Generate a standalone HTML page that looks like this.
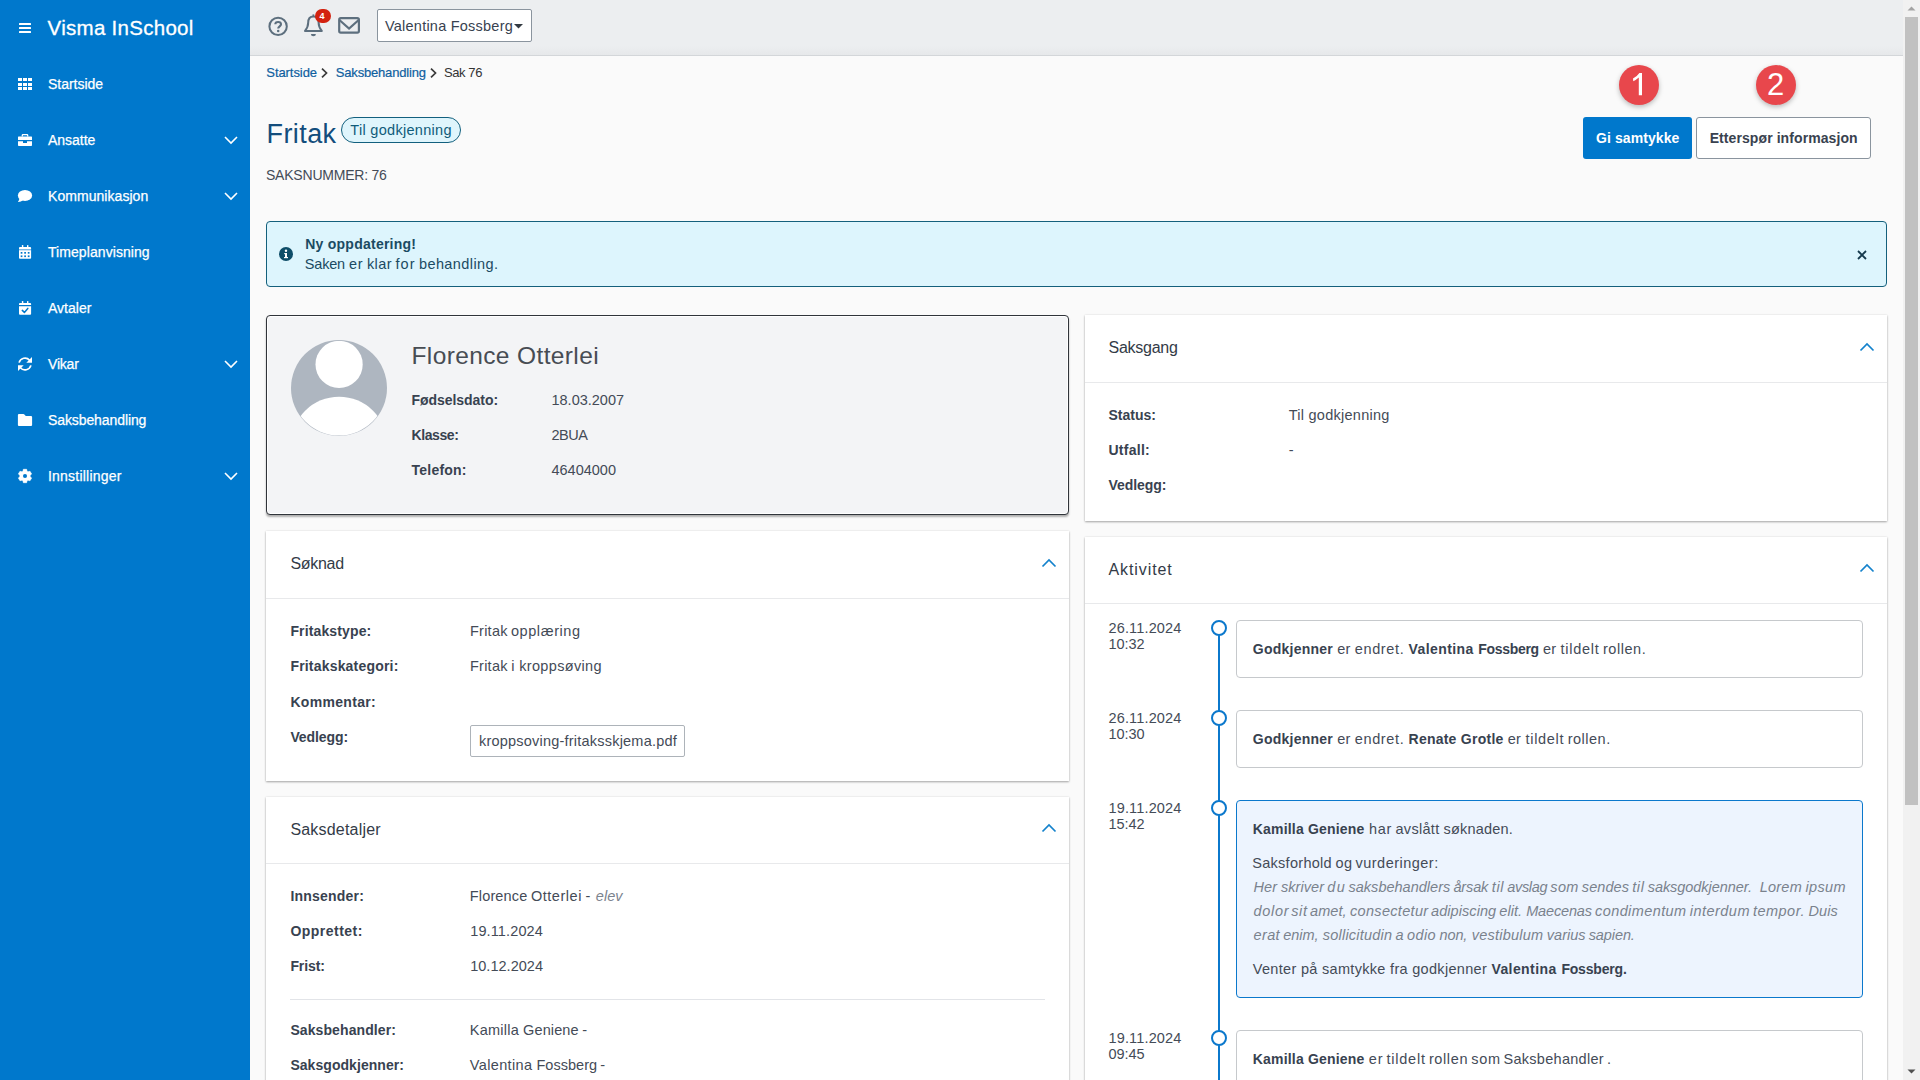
<!DOCTYPE html>
<html lang="no"><head><meta charset="utf-8"><title>Visma InSchool</title>
<style>
html,body{margin:0;padding:0;}
body{width:1920px;height:1080px;overflow:hidden;position:relative;background:#fafafa;font-family:"Liberation Sans",sans-serif;}
.t{position:absolute;white-space:pre;}
svg{position:absolute;overflow:visible;}
</style></head><body>
<div class="frame">
<div style="position:absolute;left:250px;top:0px;width:1653px;height:55px;background:linear-gradient(#eceef0 0,#eceef0 46px,#e6e8ea 55px);border-bottom:1px solid #d3d6d9;"></div>
<div style="position:absolute;left:0px;top:0px;width:250px;height:1080px;background:#0078cc;"></div>
<div style="position:absolute;left:1903px;top:0px;width:17px;height:1080px;background:#f1f1f1;"></div>
<div style="position:absolute;left:1905px;top:17px;width:13px;height:788px;background:#c1c1c1;"></div>
<svg style="left:1903px;top:0" width="17" height="17"><path d="M4.5 10.5 L8.5 6.5 L12.5 10.5Z" fill="#a3a3a3"/></svg>
<svg style="left:1903px;top:1063px" width="17" height="17"><path d="M4.5 6.5 L8.5 10.5 L12.5 6.5Z" fill="#505050"/></svg>
</div>
<nav class="sidebar">
<div style="position:absolute;left:19px;top:22.8px;width:12.3px;height:1.8px;background:#fff;border-radius:.5px;"></div>
<div style="position:absolute;left:19px;top:27.1px;width:12.3px;height:1.8px;background:#fff;border-radius:.5px;"></div>
<div style="position:absolute;left:19px;top:31.4px;width:12.3px;height:1.8px;background:#fff;border-radius:.5px;"></div>
<svg style="left:224px;top:136px" width="14" height="8"><path d="M1 1 L7 7 L13 1" fill="none" stroke="#fff" stroke-width="1.6"/></svg>
<svg style="left:224px;top:192px" width="14" height="8"><path d="M1 1 L7 7 L13 1" fill="none" stroke="#fff" stroke-width="1.6"/></svg>
<svg style="left:224px;top:360px" width="14" height="8"><path d="M1 1 L7 7 L13 1" fill="none" stroke="#fff" stroke-width="1.6"/></svg>
<svg style="left:224px;top:472px" width="14" height="8"><path d="M1 1 L7 7 L13 1" fill="none" stroke="#fff" stroke-width="1.6"/></svg>
<div style="position:absolute;left:18px;top:78px;width:4px;height:3px;background:#fff;"></div>
<div style="position:absolute;left:18px;top:82.5px;width:4px;height:3px;background:#fff;"></div>
<div style="position:absolute;left:18px;top:87px;width:4px;height:3px;background:#fff;"></div>
<div style="position:absolute;left:23px;top:78px;width:4px;height:3px;background:#fff;"></div>
<div style="position:absolute;left:23px;top:82.5px;width:4px;height:3px;background:#fff;"></div>
<div style="position:absolute;left:23px;top:87px;width:4px;height:3px;background:#fff;"></div>
<div style="position:absolute;left:28px;top:78px;width:4px;height:3px;background:#fff;"></div>
<div style="position:absolute;left:28px;top:82.5px;width:4px;height:3px;background:#fff;"></div>
<div style="position:absolute;left:28px;top:87px;width:4px;height:3px;background:#fff;"></div>
<svg style="left:0;top:0" width="250" height="600"><path d="M18.6 136.4 H31.4 Q32 136.4 32 137 V140 H18 V137 Q18 136.4 18.6 136.4Z" fill="#fff"/>
<path d="M18 141.2 H23 V143 H27 V141.2 H32 V145.3 Q32 146.1 31.2 146.1 H18.8 Q18 146.1 18 145.3Z" fill="#fff"/>
<path d="M22.3 136.6 V135.3 Q22.3 134.6 23 134.6 H27 Q27.7 134.6 27.7 135.3 V136.6" fill="none" stroke="#fff" stroke-width="1.3"/></svg>
<svg style="left:0;top:0" width="250" height="600"><ellipse cx="25" cy="195.4" rx="7.1" ry="5.5" fill="#fff"/><path d="M19.5 198 Q19.3 200.5 17.9 201.9 Q21 202 23 200.3Z" fill="#fff"/></svg>
<svg style="left:0;top:0" width="250" height="600"><rect x="21.9" y="245" width="1.4" height="3" rx="0.5" fill="#fff"/><rect x="27" y="245" width="1.4" height="3" rx="0.5" fill="#fff"/>
<path d="M19.9 247 H30.2 Q31.1 247 31.1 247.9 V249.1 H19 V247.9 Q19 247 19.9 247Z" fill="#fff"/><rect x="19" y="249.1" width="12.1" height="1.3" fill="#fff" opacity="0.55"/>
<path d="M19 250.3 H31.1 V257.8 Q31.1 258.8 30.1 258.8 H20 Q19 258.8 19 257.8Z" fill="#fff"/><rect x="20.7" y="252.0" width="1.7" height="1.7" fill="#0078cc"/><rect x="20.7" y="255.39999999999998" width="1.7" height="1.7" fill="#0078cc"/><rect x="24.25" y="252.0" width="1.7" height="1.7" fill="#0078cc"/><rect x="24.25" y="255.39999999999998" width="1.7" height="1.7" fill="#0078cc"/><rect x="27.8" y="252.0" width="1.7" height="1.7" fill="#0078cc"/><rect x="27.8" y="255.39999999999998" width="1.7" height="1.7" fill="#0078cc"/></svg>
<svg style="left:0;top:0" width="250" height="600"><rect x="21.9" y="301" width="1.4" height="3" rx="0.5" fill="#fff"/><rect x="27" y="301" width="1.4" height="3" rx="0.5" fill="#fff"/>
<path d="M19.9 303 H30.2 Q31.1 303 31.1 303.9 V305.1 H19 V303.9 Q19 303 19.9 303Z" fill="#fff"/><path d="M19 306.3 H31.1 V313.8 Q31.1 314.8 30.1 314.8 H20 Q19 314.8 19 313.8Z" fill="#fff"/>
<path d="M22.3 310.4 L24.4 312.4 L27.8 308.4" fill="none" stroke="#0078cc" stroke-width="1.5" stroke-linecap="round" stroke-linejoin="round"/></svg>
<svg style="left:0;top:0" width="250" height="600"><path d="M19.1 362.6 A6.1 6.1 0 0 1 29.6 360.2" fill="none" stroke="#fff" stroke-width="1.7"/>
<path d="M32 357.1 V362.8 H26.3Z" fill="#fff"/>
<path d="M30.9 365.4 A6.1 6.1 0 0 1 20.4 367.8" fill="none" stroke="#fff" stroke-width="1.7"/>
<path d="M18 370.9 V365.2 H23.7Z" fill="#fff"/></svg>
<svg style="left:0;top:0" width="250" height="600"><path d="M19 413.9 H23.2 Q23.7 413.9 24.1 414.3 L25.8 416 H31 Q32.1 416 32.1 417.1 V425 Q32.1 426.1 31 426.1 H19 Q17.9 426.1 17.9 425 V415 Q17.9 413.9 19 413.9Z" fill="#fff"/></svg>
<svg style="left:0;top:0" width="250" height="600"><path d="M22.92 471.34 L23.36 469.30 L26.64 469.30 L27.08 471.34 L27.99 471.87 L29.98 471.23 L31.62 474.07 L30.07 475.47 L30.07 476.53 L31.62 477.93 L29.98 480.77 L27.99 480.13 L27.08 480.66 L26.64 482.70 L23.36 482.70 L22.92 480.66 L22.01 480.13 L20.02 480.77 L18.38 477.93 L19.93 476.53 L19.93 475.47 L18.38 474.07 L20.02 471.23 L22.01 471.87Z" fill="#fff" stroke="#fff" stroke-width="0.6" stroke-linejoin="round"/><circle cx="25" cy="476" r="2.05" fill="#0078cc"/></svg>
<span class="t" style="left:47.60px;top:14px;line-height:28px;color:#fff;font-size:20.5px;font-weight:400;font-style:normal;letter-spacing:0.281px;-webkit-text-stroke:0.3px #fff;">Visma InSchool </span>
<span class="t" style="left:48.00px;top:74px;line-height:20px;color:#fff;font-size:14px;font-weight:400;font-style:normal;letter-spacing:-0.028px;-webkit-text-stroke:0.25px #fff;">Startside </span>
<span class="t" style="left:48.00px;top:130px;line-height:20px;color:#fff;font-size:14px;font-weight:400;font-style:normal;letter-spacing:-0.026px;-webkit-text-stroke:0.25px #fff;">Ansatte </span>
<span class="t" style="left:48.00px;top:186px;line-height:20px;color:#fff;font-size:14px;font-weight:400;font-style:normal;letter-spacing:0.053px;-webkit-text-stroke:0.25px #fff;">Kommunikasjon </span>
<span class="t" style="left:48.00px;top:242px;line-height:20px;color:#fff;font-size:14px;font-weight:400;font-style:normal;letter-spacing:0.071px;-webkit-text-stroke:0.25px #fff;">Timeplanvisning </span>
<span class="t" style="left:48.00px;top:298px;line-height:20px;color:#fff;font-size:14px;font-weight:400;font-style:normal;letter-spacing:0.010px;-webkit-text-stroke:0.25px #fff;">Avtaler </span>
<span class="t" style="left:48.00px;top:354px;line-height:20px;color:#fff;font-size:14px;font-weight:400;font-style:normal;letter-spacing:-0.191px;-webkit-text-stroke:0.25px #fff;">Vikar </span>
<span class="t" style="left:48.00px;top:410px;line-height:20px;color:#fff;font-size:14px;font-weight:400;font-style:normal;letter-spacing:-0.096px;-webkit-text-stroke:0.25px #fff;">Saksbehandling </span>
<span class="t" style="left:48.00px;top:466px;line-height:20px;color:#fff;font-size:14px;font-weight:400;font-style:normal;letter-spacing:0.221px;-webkit-text-stroke:0.25px #fff;">Innstillinger </span>
</nav>
<header class="topbar">
<svg style="left:0;top:0" width="400" height="56"><circle cx="278.1" cy="26.4" r="8.7" fill="none" stroke="#5d6f7e" stroke-width="2"/><path d="M275.3 24.3 C275.3 21.2 281 21.2 281 24.3 C281 26.3 278.2 26.4 278.2 28.6" fill="none" stroke="#5d6f7e" stroke-width="2.1"/><circle cx="278.2" cy="30.9" r="1.25" fill="#5d6f7e"/><path d="M313.4 16.4 C309.2 16.4 308.2 19.8 308.2 22.6 C308.2 26.6 307 28.6 305 31 L321.8 31 C319.8 28.6 318.6 26.6 318.6 22.6 C318.6 19.8 317.6 16.4 313.4 16.4Z" fill="none" stroke="#5d6f7e" stroke-width="2" stroke-linejoin="round"/><rect x="312.5" y="14.4" width="1.8" height="2" fill="#5d6f7e"/><path d="M310.9 33.9 A2.5 2.4 0 0 0 315.9 33.9Z" fill="#5d6f7e"/><rect x="339.2" y="18.1" width="19.7" height="14.6" rx="1.6" fill="none" stroke="#5d6f7e" stroke-width="2.2"/><path d="M339.4 20 L349.05 28.6 L358.7 20" fill="none" stroke="#5d6f7e" stroke-width="2.2"/></svg>
<div style="position:absolute;left:315px;top:9px;width:16px;height:14px;background:#d3220f;border-radius:7px;"></div>
<div style="position:absolute;left:377px;top:9px;width:153px;height:31px;background:#fff;border:1px solid #8a949e;border-radius:2px;"></div>
<svg style="left:513.8px;top:24.2px" width="10" height="6"><path d="M0 0 L9 0 L4.5 4.6Z" fill="#333a42"/></svg>
<span class="t" style="left:319.60px;top:6px;line-height:20px;color:#fff;font-size:9px;font-weight:700;font-style:normal;letter-spacing:0.000px;">4 </span>
<span class="t" style="left:385.00px;top:16px;line-height:20px;color:#384250;font-size:14.5px;font-weight:400;font-style:normal;letter-spacing:0.230px;">Valentina Fossberg </span>
</header>
<nav class="breadcrumb">
<svg style="left:320.5px;top:68px" width="7" height="10"><path d="M1 0.7 L5.5 5 L1 9.3" fill="none" stroke="#3a3a3a" stroke-width="1.7"/></svg>
<svg style="left:429.5px;top:68px" width="7" height="10"><path d="M1 0.7 L5.5 5 L1 9.3" fill="none" stroke="#3a3a3a" stroke-width="1.7"/></svg>
<span class="t" style="left:266.30px;top:63px;line-height:20px;color:#0f5f9f;font-size:13px;font-weight:400;font-style:normal;letter-spacing:-0.068px;-webkit-text-stroke:0.2px;">Startside </span>
<span class="t" style="left:335.80px;top:63px;line-height:20px;color:#0f5f9f;font-size:13px;font-weight:400;font-style:normal;letter-spacing:-0.181px;-webkit-text-stroke:0.2px;">Saksbehandling </span>
<span class="t" style="left:444.00px;top:63px;line-height:20px;color:#333;font-size:13px;font-weight:400;font-style:normal;letter-spacing:-0.414px;">Sak 76 </span>
</nav>
<section class="pagehead">
<div style="position:absolute;left:341px;top:117px;width:118px;height:24px;background:#dff5fc;border:1px solid #12607e;border-radius:13px;"></div>
<span class="t" style="left:266.50px;top:117px;line-height:34px;color:#134d7c;font-size:27px;font-weight:400;font-style:normal;letter-spacing:0.417px;">Fritak </span>
<span class="t" style="left:350.30px;top:120px;line-height:20px;color:#105c7a;font-size:14.5px;font-weight:400;font-style:normal;letter-spacing:0.300px;">Til godkjenning </span>
<span class="t" style="left:266.00px;top:165px;line-height:20px;color:#444b57;font-size:14px;font-weight:400;font-style:normal;letter-spacing:-0.215px;">SAKSNUMMER: 76 </span>
</section>
<div class="actions">
<div style="position:absolute;left:1619px;top:65px;width:40px;height:40px;background:#e8474c;border-radius:50%;box-shadow:0 2px 5px rgba(0,0,0,.26);"></div>
<svg style="left:0;top:0" width="1920" height="120"><path d="M1639.4 73 L1642 73 L1642 95.2 L1638.8 95.2 L1638.8 77.6 Q1636.4 79.8 1633.3 81.3 L1633 78.4 Q1637.2 76.4 1639.4 73Z" fill="#fff"/></svg>
<div style="position:absolute;left:1756px;top:65px;width:40px;height:40px;background:#e8474c;border-radius:50%;box-shadow:0 2px 5px rgba(0,0,0,.26);"></div>
<div style="position:absolute;left:1583px;top:117px;width:109px;height:42px;background:#0078cc;border-radius:3px;"></div>
<div style="position:absolute;left:1696px;top:117px;width:173px;height:40px;background:#fff;border:1px solid #8a949e;border-radius:3px;"></div>
<span class="t" style="left:1766.90px;top:65px;line-height:40px;color:#fff;font-size:31px;font-weight:400;font-style:normal;letter-spacing:0.000px;">2 </span>
<span class="t" style="left:1596.00px;top:128px;line-height:20px;color:#fff;font-size:14px;font-weight:700;font-style:normal;letter-spacing:0.091px;">Gi samtykke </span>
<span class="t" style="left:1709.70px;top:128px;line-height:20px;color:#39424f;font-size:14px;font-weight:700;font-style:normal;letter-spacing:0.083px;">Etterspør informasjon </span>
</div>
<div class="alert">
<div style="position:absolute;left:266px;top:221px;width:1619px;height:64px;background:#ddf5fd;border:1px solid #14607c;border-radius:4px;"></div>
<svg style="left:279px;top:247px" width="14" height="14"><circle cx="7" cy="7" r="7" fill="#0e4d68"/><rect x="6" y="6" width="2" height="5" fill="#fff"/><rect x="5.2" y="6" width="2" height="1.2" fill="#fff"/><rect x="5" y="10" width="4" height="1.2" fill="#fff"/><circle cx="7" cy="3.8" r="1.2" fill="#fff"/></svg>
<svg style="left:1857px;top:250px" width="10" height="10"><path d="M1 1 L9 9 M9 1 L1 9" stroke="#163a4d" stroke-width="1.8"/></svg>
<span class="t" style="left:305.25px;top:234px;line-height:20px;color:#1b4b63;font-size:14px;font-weight:700;font-style:normal;letter-spacing:0.244px;">Ny oppdatering! </span>
<span class="t" style="left:304.80px;top:254px;line-height:20px;color:#1b4b63;font-size:14.5px;font-weight:400;font-style:normal;letter-spacing:-0.185px;">Saken </span>
<span class="t" style="left:348.95px;top:254px;line-height:20px;color:#1b4b63;font-size:14.5px;font-weight:400;font-style:normal;letter-spacing:0.772px;">er </span>
<span class="t" style="left:366.90px;top:254px;line-height:20px;color:#1b4b63;font-size:14.5px;font-weight:400;font-style:normal;letter-spacing:0.456px;">klar </span>
<span class="t" style="left:395.60px;top:254px;line-height:20px;color:#1b4b63;font-size:14.5px;font-weight:400;font-style:normal;letter-spacing:0.976px;">for </span>
<span class="t" style="left:418.95px;top:254px;line-height:20px;color:#1b4b63;font-size:14.5px;font-weight:400;font-style:normal;letter-spacing:0.405px;">behandling. </span>
</div>
<section class="profile">
<div style="position:absolute;left:266px;top:315px;width:801px;height:198px;background:#f3f4f6;border:1px solid #30343a;border-radius:4px;box-shadow:0 2px 2px rgba(0,0,0,.3),inset 0 0 0 1px #fff;"></div>
<svg style="left:291px;top:340px" width="96" height="96"><defs><clipPath id="av"><circle cx="48" cy="48" r="47.5"/></clipPath></defs>
<circle cx="48" cy="48" r="48" fill="#aeb6c0"/><g clip-path="url(#av)"><circle cx="48.1" cy="24.4" r="23.6" fill="#fff"/><circle cx="48.1" cy="104.7" r="48" fill="#fff"/></g></svg>
<span class="t" style="left:411.50px;top:340px;line-height:32px;color:#474c53;font-size:24.5px;font-weight:400;font-style:normal;letter-spacing:0.376px;">Florence Otterlei </span>
<span class="t" style="left:411.50px;top:390px;line-height:20px;color:#384250;font-size:14px;font-weight:700;font-style:normal;letter-spacing:-0.052px;">Fødselsdato: </span>
<span class="t" style="left:551.50px;top:390px;line-height:20px;color:#444b57;font-size:14.5px;font-weight:400;font-style:normal;letter-spacing:-0.008px;">18.03.2007 </span>
<span class="t" style="left:411.50px;top:425px;line-height:20px;color:#384250;font-size:14px;font-weight:700;font-style:normal;letter-spacing:-0.402px;">Klasse: </span>
<span class="t" style="left:551.50px;top:425px;line-height:20px;color:#444b57;font-size:14.5px;font-weight:400;font-style:normal;letter-spacing:-0.473px;">2BUA </span>
<span class="t" style="left:411.50px;top:460px;line-height:20px;color:#384250;font-size:14px;font-weight:700;font-style:normal;letter-spacing:0.230px;">Telefon: </span>
<span class="t" style="left:551.50px;top:460px;line-height:20px;color:#444b57;font-size:14.5px;font-weight:400;font-style:normal;letter-spacing:-0.002px;">46404000 </span>
</section>
<section class="soknad">
<div style="position:absolute;left:266px;top:531px;width:803px;height:250px;background:#fff;box-shadow:0 1px 2px rgba(0,0,0,.33),0 0 2px rgba(0,0,0,.08);"></div>
<div style="position:absolute;left:266px;top:598px;width:803px;height:1px;background:#e8e9eb;"></div>
<svg style="left:1040.9px;top:558px" width="16" height="10"><path d="M1.5 8.5 L8 2 L14.5 8.5" fill="none" stroke="#1482cc" stroke-width="1.7"/></svg>
<div style="position:absolute;left:470px;top:725px;width:213px;height:30px;background:#fff;border:1px solid #adb3b9;border-radius:2px;"></div>
<span class="t" style="left:290.40px;top:553px;line-height:22px;color:#333b47;font-size:16px;font-weight:400;font-style:normal;letter-spacing:-0.290px;">Søknad </span>
<span class="t" style="left:290.40px;top:621px;line-height:20px;color:#384250;font-size:14px;font-weight:700;font-style:normal;letter-spacing:0.137px;">Fritakstype: </span>
<span class="t" style="left:469.90px;top:621px;line-height:20px;color:#444b57;font-size:14.5px;font-weight:400;font-style:normal;letter-spacing:0.275px;">Fritak </span>
<span class="t" style="left:510.90px;top:621px;line-height:20px;color:#444b57;font-size:14.5px;font-weight:400;font-style:normal;letter-spacing:0.589px;">opplæring </span>
<span class="t" style="left:290.40px;top:656px;line-height:20px;color:#384250;font-size:14px;font-weight:700;font-style:normal;letter-spacing:0.191px;">Fritakskategori: </span>
<span class="t" style="left:469.90px;top:656px;line-height:20px;color:#444b57;font-size:14.5px;font-weight:400;font-style:normal;letter-spacing:0.275px;">Fritak </span>
<span class="t" style="left:511.30px;top:656px;line-height:20px;color:#444b57;font-size:14.5px;font-weight:400;font-style:normal;letter-spacing:0.366px;">i </span>
<span class="t" style="left:519.20px;top:656px;line-height:20px;color:#444b57;font-size:14.5px;font-weight:400;font-style:normal;letter-spacing:0.342px;">kroppsøving </span>
<span class="t" style="left:290.40px;top:692px;line-height:20px;color:#384250;font-size:14px;font-weight:700;font-style:normal;letter-spacing:0.313px;">Kommentar: </span>
<span class="t" style="left:290.40px;top:727px;line-height:20px;color:#384250;font-size:14px;font-weight:700;font-style:normal;letter-spacing:-0.095px;">Vedlegg: </span>
<span class="t" style="left:479.00px;top:731px;line-height:20px;color:#444b57;font-size:14.5px;font-weight:400;font-style:normal;letter-spacing:0.213px;">kroppsoving-fritaksskjema.pdf </span>
</section>
<section class="saksdetaljer">
<div style="position:absolute;left:266px;top:797px;width:803px;height:300px;background:#fff;box-shadow:0 1px 2px rgba(0,0,0,.33),0 0 2px rgba(0,0,0,.08);"></div>
<div style="position:absolute;left:266px;top:863px;width:803px;height:1px;background:#e8e9eb;"></div>
<svg style="left:1040.9px;top:823px" width="16" height="10"><path d="M1.5 8.5 L8 2 L14.5 8.5" fill="none" stroke="#1482cc" stroke-width="1.7"/></svg>
<div style="position:absolute;left:290px;top:999px;width:755px;height:1px;background:#e2e4e8;"></div>
<span class="t" style="left:290.40px;top:819px;line-height:22px;color:#333b47;font-size:16px;font-weight:400;font-style:normal;letter-spacing:0.196px;">Saksdetaljer </span>
<span class="t" style="left:290.40px;top:886px;line-height:20px;color:#384250;font-size:14px;font-weight:700;font-style:normal;letter-spacing:0.222px;">Innsender: </span>
<span class="t" style="left:469.80px;top:886px;line-height:20px;color:#444b57;font-size:14.5px;font-weight:400;font-style:normal;letter-spacing:0.147px;">Florence </span>
<span class="t" style="left:530.90px;top:886px;line-height:20px;color:#444b57;font-size:14.5px;font-weight:400;font-style:normal;letter-spacing:0.544px;">Otterlei </span>
<span class="t" style="left:585.50px;top:886px;line-height:20px;color:#444b57;font-size:14.5px;font-weight:400;font-style:normal;letter-spacing:0.956px;">- </span>
<span class="t" style="left:595.80px;top:886px;line-height:20px;color:#7b838e;font-size:14.5px;font-weight:400;font-style:italic;letter-spacing:0.073px;">elev </span>
<span class="t" style="left:290.40px;top:921px;line-height:20px;color:#384250;font-size:14px;font-weight:700;font-style:normal;letter-spacing:0.483px;">Opprettet: </span>
<span class="t" style="left:470.20px;top:921px;line-height:20px;color:#444b57;font-size:14.5px;font-weight:400;font-style:normal;letter-spacing:0.130px;">19.11.2024 </span>
<span class="t" style="left:290.40px;top:956px;line-height:20px;color:#384250;font-size:14px;font-weight:700;font-style:normal;letter-spacing:-0.100px;">Frist: </span>
<span class="t" style="left:470.20px;top:956px;line-height:20px;color:#444b57;font-size:14.5px;font-weight:400;font-style:normal;letter-spacing:0.022px;">10.12.2024 </span>
<span class="t" style="left:290.40px;top:1020px;line-height:20px;color:#384250;font-size:14px;font-weight:700;font-style:normal;letter-spacing:0.095px;">Saksbehandler: </span>
<span class="t" style="left:469.80px;top:1020px;line-height:20px;color:#444b57;font-size:14.5px;font-weight:400;font-style:normal;letter-spacing:0.236px;">Kamilla </span>
<span class="t" style="left:523.10px;top:1020px;line-height:20px;color:#444b57;font-size:14.5px;font-weight:400;font-style:normal;letter-spacing:0.110px;">Geniene </span>
<span class="t" style="left:582.30px;top:1020px;line-height:20px;color:#444b57;font-size:14.5px;font-weight:400;font-style:normal;letter-spacing:0.456px;">- </span>
<span class="t" style="left:290.40px;top:1055px;line-height:20px;color:#384250;font-size:14px;font-weight:700;font-style:normal;letter-spacing:0.051px;">Saksgodkjenner: </span>
<span class="t" style="left:469.80px;top:1055px;line-height:20px;color:#444b57;font-size:14.5px;font-weight:400;font-style:normal;letter-spacing:0.357px;">Valentina </span>
<span class="t" style="left:536.40px;top:1055px;line-height:20px;color:#444b57;font-size:14.5px;font-weight:400;font-style:normal;letter-spacing:0.043px;">Fossberg </span>
<span class="t" style="left:600.30px;top:1055px;line-height:20px;color:#444b57;font-size:14.5px;font-weight:400;font-style:normal;letter-spacing:0.756px;">- </span>
</section>
<section class="saksgang">
<div style="position:absolute;left:1085px;top:315px;width:802px;height:206px;background:#fff;box-shadow:0 1px 2px rgba(0,0,0,.33),0 0 2px rgba(0,0,0,.08);"></div>
<div style="position:absolute;left:1085px;top:382px;width:802px;height:1px;background:#e8e9eb;"></div>
<svg style="left:1858.9px;top:341.5px" width="16" height="10"><path d="M1.5 8.5 L8 2 L14.5 8.5" fill="none" stroke="#1482cc" stroke-width="1.7"/></svg>
<span class="t" style="left:1108.50px;top:337px;line-height:22px;color:#333b47;font-size:16px;font-weight:400;font-style:normal;letter-spacing:-0.259px;">Saksgang </span>
<span class="t" style="left:1108.50px;top:405px;line-height:20px;color:#384250;font-size:14px;font-weight:700;font-style:normal;letter-spacing:-0.008px;">Status: </span>
<span class="t" style="left:1288.70px;top:405px;line-height:20px;color:#444b57;font-size:14.5px;font-weight:400;font-style:normal;letter-spacing:0.260px;">Til godkjenning </span>
<span class="t" style="left:1108.50px;top:440px;line-height:20px;color:#384250;font-size:14px;font-weight:700;font-style:normal;letter-spacing:0.261px;">Utfall: </span>
<span class="t" style="left:1288.70px;top:440px;line-height:20px;color:#444b57;font-size:14.5px;font-weight:400;font-style:normal;letter-spacing:0.000px;">- </span>
<span class="t" style="left:1108.50px;top:475px;line-height:20px;color:#384250;font-size:14px;font-weight:700;font-style:normal;letter-spacing:-0.045px;">Vedlegg: </span>
</section>
<section class="aktivitet">
<div style="position:absolute;left:1085px;top:537px;width:802px;height:560px;background:#fff;box-shadow:0 1px 2px rgba(0,0,0,.33),0 0 2px rgba(0,0,0,.08);"></div>
<div style="position:absolute;left:1085px;top:603px;width:802px;height:1px;background:#e8e9eb;"></div>
<svg style="left:1858.9px;top:563px" width="16" height="10"><path d="M1.5 8.5 L8 2 L14.5 8.5" fill="none" stroke="#1482cc" stroke-width="1.7"/></svg>
<div style="position:absolute;left:1218px;top:628px;width:2px;height:460px;background:#0b78cc;"></div>
<div style="position:absolute;left:1211px;top:620px;width:12px;height:12px;background:#fff;border:2px solid #0b78cc;border-radius:50%;"></div>
<div style="position:absolute;left:1236px;top:620px;width:625px;height:56px;background:#fff;border:1px solid #c6c9cc;border-radius:4px;"></div>
<div style="position:absolute;left:1211px;top:710px;width:12px;height:12px;background:#fff;border:2px solid #0b78cc;border-radius:50%;"></div>
<div style="position:absolute;left:1236px;top:710px;width:625px;height:56px;background:#fff;border:1px solid #c6c9cc;border-radius:4px;"></div>
<div style="position:absolute;left:1211px;top:800px;width:12px;height:12px;background:#fff;border:2px solid #0b78cc;border-radius:50%;"></div>
<div style="position:absolute;left:1236px;top:800px;width:625px;height:196px;background:#edf4fe;border:1px solid #0b78cc;border-radius:4px;"></div>
<div style="position:absolute;left:1211px;top:1030px;width:12px;height:12px;background:#fff;border:2px solid #0b78cc;border-radius:50%;"></div>
<div style="position:absolute;left:1236px;top:1030px;width:625px;height:60px;background:#fff;border:1px solid #c6c9cc;border-radius:4px;"></div>
<span class="t" style="left:1108.50px;top:559px;line-height:22px;color:#333b47;font-size:16px;font-weight:400;font-style:normal;letter-spacing:0.909px;">Aktivitet </span>
<span class="t" style="left:1108.50px;top:618px;line-height:20px;color:#444b57;font-size:14.5px;font-weight:400;font-style:normal;letter-spacing:0.150px;">26.11.2024 </span>
<span class="t" style="left:1108.50px;top:634px;line-height:20px;color:#444b57;font-size:14.5px;font-weight:400;font-style:normal;letter-spacing:-0.079px;">10:32 </span>
<span class="t" style="left:1252.80px;top:639px;line-height:20px;color:#384250;font-size:14px;font-weight:700;font-style:normal;letter-spacing:0.240px;">Godkjenner </span>
<span class="t" style="left:1337.20px;top:639px;line-height:20px;color:#444b57;font-size:14.5px;font-weight:400;font-style:normal;letter-spacing:0.147px;">er </span>
<span class="t" style="left:1354.70px;top:639px;line-height:20px;color:#444b57;font-size:14.5px;font-weight:400;font-style:normal;letter-spacing:0.663px;">endret. </span>
<span class="t" style="left:1408.60px;top:639px;line-height:20px;color:#384250;font-size:14px;font-weight:700;font-style:normal;letter-spacing:0.392px;">Valentina </span>
<span class="t" style="left:1478.30px;top:639px;line-height:20px;color:#384250;font-size:14px;font-weight:700;font-style:normal;letter-spacing:-0.314px;">Fossberg </span>
<span class="t" style="left:1543.00px;top:639px;line-height:20px;color:#444b57;font-size:14.5px;font-weight:400;font-style:normal;letter-spacing:0.147px;">er </span>
<span class="t" style="left:1560.50px;top:639px;line-height:20px;color:#444b57;font-size:14.5px;font-weight:400;font-style:normal;letter-spacing:0.734px;">tildelt </span>
<span class="t" style="left:1603.00px;top:639px;line-height:20px;color:#444b57;font-size:14.5px;font-weight:400;font-style:normal;letter-spacing:0.529px;">rollen. </span>
<span class="t" style="left:1108.50px;top:708px;line-height:20px;color:#444b57;font-size:14.5px;font-weight:400;font-style:normal;letter-spacing:0.150px;">26.11.2024 </span>
<span class="t" style="left:1108.50px;top:724px;line-height:20px;color:#444b57;font-size:14.5px;font-weight:400;font-style:normal;letter-spacing:-0.079px;">10:30 </span>
<span class="t" style="left:1252.80px;top:729px;line-height:20px;color:#384250;font-size:14px;font-weight:700;font-style:normal;letter-spacing:0.240px;">Godkjenner </span>
<span class="t" style="left:1337.20px;top:729px;line-height:20px;color:#444b57;font-size:14.5px;font-weight:400;font-style:normal;letter-spacing:0.147px;">er </span>
<span class="t" style="left:1354.70px;top:729px;line-height:20px;color:#444b57;font-size:14.5px;font-weight:400;font-style:normal;letter-spacing:0.663px;">endret. </span>
<span class="t" style="left:1408.60px;top:729px;line-height:20px;color:#384250;font-size:14px;font-weight:700;font-style:normal;letter-spacing:0.219px;">Renate </span>
<span class="t" style="left:1460.80px;top:729px;line-height:20px;color:#384250;font-size:14px;font-weight:700;font-style:normal;letter-spacing:0.261px;">Grotle </span>
<span class="t" style="left:1507.70px;top:729px;line-height:20px;color:#444b57;font-size:14.5px;font-weight:400;font-style:normal;letter-spacing:0.147px;">er </span>
<span class="t" style="left:1525.50px;top:729px;line-height:20px;color:#444b57;font-size:14.5px;font-weight:400;font-style:normal;letter-spacing:0.692px;">tildelt </span>
<span class="t" style="left:1567.70px;top:729px;line-height:20px;color:#444b57;font-size:14.5px;font-weight:400;font-style:normal;letter-spacing:0.500px;">rollen. </span>
<span class="t" style="left:1108.50px;top:798px;line-height:20px;color:#444b57;font-size:14.5px;font-weight:400;font-style:normal;letter-spacing:0.150px;">19.11.2024 </span>
<span class="t" style="left:1108.50px;top:814px;line-height:20px;color:#444b57;font-size:14.5px;font-weight:400;font-style:normal;letter-spacing:-0.079px;">15:42 </span>
<span class="t" style="left:1252.80px;top:819px;line-height:20px;color:#384250;font-size:14px;font-weight:700;font-style:normal;letter-spacing:0.178px;">Kamilla Geniene </span>
<span class="t" style="left:1368.90px;top:819px;line-height:20px;color:#444b57;font-size:14.5px;font-weight:400;font-style:normal;letter-spacing:0.710px;">har </span>
<span class="t" style="left:1395.50px;top:819px;line-height:20px;color:#444b57;font-size:14.5px;font-weight:400;font-style:normal;letter-spacing:0.297px;">avslått </span>
<span class="t" style="left:1443.50px;top:819px;line-height:20px;color:#444b57;font-size:14.5px;font-weight:400;font-style:normal;letter-spacing:0.187px;">søknaden. </span>
<span class="t" style="left:1252.20px;top:853px;line-height:20px;color:#444b57;font-size:14.5px;font-weight:400;font-style:normal;letter-spacing:0.293px;">Saksforhold </span>
<span class="t" style="left:1335.50px;top:853px;line-height:20px;color:#444b57;font-size:14.5px;font-weight:400;font-style:normal;letter-spacing:0.380px;">og </span>
<span class="t" style="left:1355.50px;top:853px;line-height:20px;color:#444b57;font-size:14.5px;font-weight:400;font-style:normal;letter-spacing:0.485px;">vurderinger: </span>
<span class="t" style="left:1253.40px;top:877px;line-height:20px;color:#7a828d;font-size:14.5px;font-weight:400;font-style:italic;letter-spacing:0.175px;">Her </span>
<span class="t" style="left:1280.90px;top:877px;line-height:20px;color:#7a828d;font-size:14.5px;font-weight:400;font-style:italic;letter-spacing:0.085px;">skriver </span>
<span class="t" style="left:1327.30px;top:877px;line-height:20px;color:#7a828d;font-size:14.5px;font-weight:400;font-style:italic;letter-spacing:1.280px;">du </span>
<span class="t" style="left:1348.50px;top:877px;line-height:20px;color:#7a828d;font-size:14.5px;font-weight:400;font-style:italic;letter-spacing:0.016px;">saksbehandlers </span>
<span class="t" style="left:1453.40px;top:877px;line-height:20px;color:#7a828d;font-size:14.5px;font-weight:400;font-style:italic;letter-spacing:-0.134px;">årsak </span>
<span class="t" style="left:1491.80px;top:877px;line-height:20px;color:#7a828d;font-size:14.5px;font-weight:400;font-style:italic;letter-spacing:0.639px;">til </span>
<span class="t" style="left:1507.30px;top:877px;line-height:20px;color:#7a828d;font-size:14.5px;font-weight:400;font-style:italic;letter-spacing:-0.337px;">avslag </span>
<span class="t" style="left:1550.30px;top:877px;line-height:20px;color:#7a828d;font-size:14.5px;font-weight:400;font-style:italic;letter-spacing:0.331px;">som </span>
<span class="t" style="left:1581.80px;top:877px;line-height:20px;color:#7a828d;font-size:14.5px;font-weight:400;font-style:italic;letter-spacing:0.089px;">sendes </span>
<span class="t" style="left:1632.20px;top:877px;line-height:20px;color:#7a828d;font-size:14.5px;font-weight:400;font-style:italic;letter-spacing:0.639px;">til </span>
<span class="t" style="left:1647.70px;top:877px;line-height:20px;color:#7a828d;font-size:14.5px;font-weight:400;font-style:italic;letter-spacing:-0.051px;">saksgodkjenner. </span>
<span class="t" style="left:1759.70px;top:877px;line-height:20px;color:#7a828d;font-size:14.5px;font-weight:400;font-style:italic;letter-spacing:0.238px;">Lorem </span>
<span class="t" style="left:1805.50px;top:877px;line-height:20px;color:#7a828d;font-size:14.5px;font-weight:400;font-style:italic;letter-spacing:0.343px;">ipsum </span>
<span class="t" style="left:1253.40px;top:901px;line-height:20px;color:#7a828d;font-size:14.5px;font-weight:400;font-style:italic;letter-spacing:0.730px;">dolor </span>
<span class="t" style="left:1291.20px;top:901px;line-height:20px;color:#7a828d;font-size:14.5px;font-weight:400;font-style:italic;letter-spacing:0.633px;">sit </span>
<span class="t" style="left:1310.10px;top:901px;line-height:20px;color:#7a828d;font-size:14.5px;font-weight:400;font-style:italic;letter-spacing:0.047px;">amet, </span>
<span class="t" style="left:1350.00px;top:901px;line-height:20px;color:#7a828d;font-size:14.5px;font-weight:400;font-style:italic;letter-spacing:0.321px;">consectetur </span>
<span class="t" style="left:1431.00px;top:901px;line-height:20px;color:#7a828d;font-size:14.5px;font-weight:400;font-style:italic;letter-spacing:0.070px;">adipiscing </span>
<span class="t" style="left:1499.30px;top:901px;line-height:20px;color:#7a828d;font-size:14.5px;font-weight:400;font-style:italic;letter-spacing:0.024px;">elit. </span>
<span class="t" style="left:1526.20px;top:901px;line-height:20px;color:#7a828d;font-size:14.5px;font-weight:400;font-style:italic;letter-spacing:-0.151px;">Maecenas </span>
<span class="t" style="left:1595.10px;top:901px;line-height:20px;color:#7a828d;font-size:14.5px;font-weight:400;font-style:italic;letter-spacing:0.396px;">condimentum </span>
<span class="t" style="left:1689.70px;top:901px;line-height:20px;color:#7a828d;font-size:14.5px;font-weight:400;font-style:italic;letter-spacing:0.485px;">interdum </span>
<span class="t" style="left:1753.00px;top:901px;line-height:20px;color:#7a828d;font-size:14.5px;font-weight:400;font-style:italic;letter-spacing:0.468px;">tempor. </span>
<span class="t" style="left:1808.40px;top:901px;line-height:20px;color:#7a828d;font-size:14.5px;font-weight:400;font-style:italic;letter-spacing:0.121px;">Duis </span>
<span class="t" style="left:1253.40px;top:925px;line-height:20px;color:#7a828d;font-size:14.5px;font-weight:400;font-style:italic;letter-spacing:0.425px;">erat </span>
<span class="t" style="left:1283.20px;top:925px;line-height:20px;color:#7a828d;font-size:14.5px;font-weight:400;font-style:italic;letter-spacing:-0.034px;">enim, </span>
<span class="t" style="left:1322.70px;top:925px;line-height:20px;color:#7a828d;font-size:14.5px;font-weight:400;font-style:italic;letter-spacing:0.233px;">sollicitudin </span>
<span class="t" style="left:1395.50px;top:925px;line-height:20px;color:#7a828d;font-size:14.5px;font-weight:400;font-style:italic;letter-spacing:-0.278px;">a </span>
<span class="t" style="left:1407.00px;top:925px;line-height:20px;color:#7a828d;font-size:14.5px;font-weight:400;font-style:italic;letter-spacing:0.395px;">odio </span>
<span class="t" style="left:1439.60px;top:925px;line-height:20px;color:#7a828d;font-size:14.5px;font-weight:400;font-style:italic;letter-spacing:-0.159px;">non, </span>
<span class="t" style="left:1471.80px;top:925px;line-height:20px;color:#7a828d;font-size:14.5px;font-weight:400;font-style:italic;letter-spacing:0.209px;">vestibulum </span>
<span class="t" style="left:1546.80px;top:925px;line-height:20px;color:#7a828d;font-size:14.5px;font-weight:400;font-style:italic;letter-spacing:0.019px;">varius </span>
<span class="t" style="left:1588.70px;top:925px;line-height:20px;color:#7a828d;font-size:14.5px;font-weight:400;font-style:italic;letter-spacing:-0.095px;">sapien. </span>
<span class="t" style="left:1252.80px;top:959px;line-height:20px;color:#444b57;font-size:14.5px;font-weight:400;font-style:normal;letter-spacing:0.309px;">Venter på samtykke fra godkjenner  </span>
<span class="t" style="left:1491.40px;top:959px;line-height:20px;color:#384250;font-size:14px;font-weight:700;font-style:normal;letter-spacing:0.426px;">Valentina </span>
<span class="t" style="left:1561.40px;top:959px;line-height:20px;color:#384250;font-size:14px;font-weight:700;font-style:normal;letter-spacing:-0.190px;">Fossberg. </span>
<span class="t" style="left:1108.50px;top:1028px;line-height:20px;color:#444b57;font-size:14.5px;font-weight:400;font-style:normal;letter-spacing:0.150px;">19.11.2024 </span>
<span class="t" style="left:1108.50px;top:1044px;line-height:20px;color:#444b57;font-size:14.5px;font-weight:400;font-style:normal;letter-spacing:-0.079px;">09:45 </span>
<span class="t" style="left:1252.80px;top:1049px;line-height:20px;color:#384250;font-size:14px;font-weight:700;font-style:normal;letter-spacing:0.178px;">Kamilla Geniene </span>
<span class="t" style="left:1368.70px;top:1049px;line-height:20px;color:#444b57;font-size:14.5px;font-weight:400;font-style:normal;letter-spacing:1.047px;">er </span>
<span class="t" style="left:1386.40px;top:1049px;line-height:20px;color:#444b57;font-size:14.5px;font-weight:400;font-style:normal;letter-spacing:0.792px;">tildelt </span>
<span class="t" style="left:1428.90px;top:1049px;line-height:20px;color:#444b57;font-size:14.5px;font-weight:400;font-style:normal;letter-spacing:0.622px;">rollen </span>
<span class="t" style="left:1471.20px;top:1049px;line-height:20px;color:#444b57;font-size:14.5px;font-weight:400;font-style:normal;letter-spacing:0.731px;">som </span>
<span class="t" style="left:1503.50px;top:1049px;line-height:20px;color:#444b57;font-size:14.5px;font-weight:400;font-style:normal;letter-spacing:0.281px;">Saksbehandler </span>
<span class="t" style="left:1607.00px;top:1049px;line-height:20px;color:#444b57;font-size:14.5px;font-weight:400;font-style:normal;letter-spacing:0.169px;">. </span>
</section>
</body></html>
